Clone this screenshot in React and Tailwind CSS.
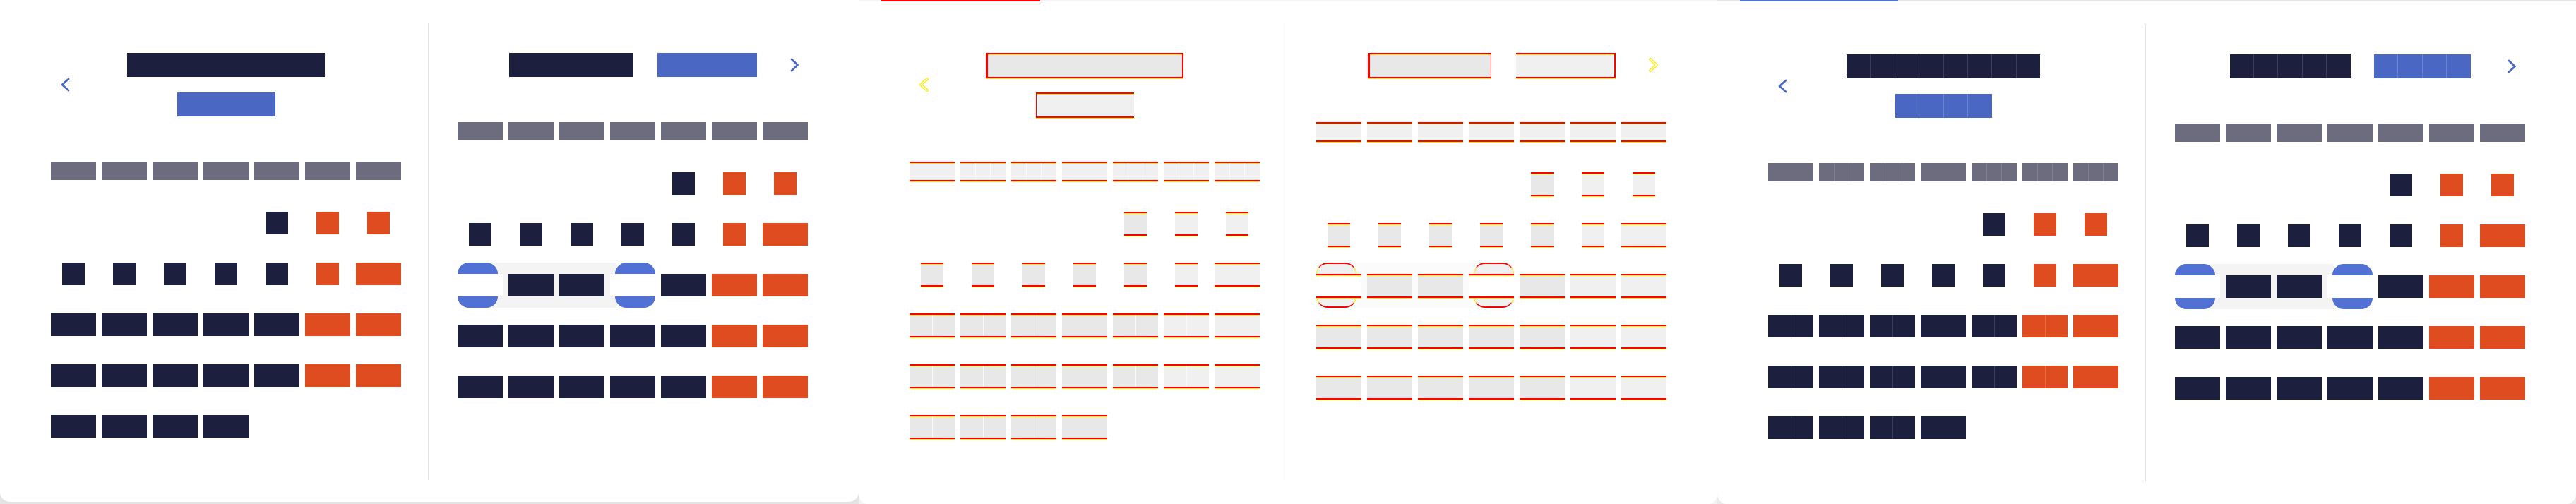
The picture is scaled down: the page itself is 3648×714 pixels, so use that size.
import clsx from "clsx";

const FILL = {
  dark: "bg-[#1c1f3d]",
  orange: "bg-[#de4c1f]",
  grey: "bg-[#6c6c7e]",
  blue: "bg-[#4b67c4]",
  white: "bg-white",
};

const DIFF_FILL = {
  dark: "bg-[#e8e8e8]",
  orange: "bg-[#f0f0f0]",
  grey: "bg-[#f0f0f0]",
  blue: "bg-[#f0f0f0]",
  white: "bg-white",
};

const SEAM = {
  dark: "divide-[#3a3d5c]",
  orange: "divide-[#e6693f]",
  grey: "divide-[#7e7e8f]",
  blue: "divide-[#6a82d2]",
  white: "divide-white",
};

// seams per weekday cell in the left month of the shifted copy
const WD_SEAMS = [0, 2, 2, 0, 2, 2, 2];

// widths of the header blocks, the shifted copy renders a bit narrower
const HEAD = {
  a: { lt: "w-[280px]", lb: "w-[139px]", rt: "w-[175px]", rb: "w-[141px]", gap: "gap-[35px]" },
  diff: { lt: "w-[280px]", lb: "w-[139px]", rt: "w-[175px]", rb: "w-[141px]", gap: "gap-[35px]" },
  b: { lt: "w-[274px]", lb: "w-[137px]", rt: "w-[171px]", rb: "w-[137px]", gap: "gap-[33px]" },
};

function buildWeeks(offset, days) {
  const cells = [...Array(offset).fill(null), ...Array.from({ length: days }, (_, i) => i + 1)];
  while (cells.length % 7) cells.push(null);
  const weeks = [];
  for (let i = 0; i < cells.length; i += 7) weeks.push(cells.slice(i, i + 7));
  return weeks;
}

function Block({ kind, w, h, dh, mode, seams = 0, edge }) {
  const diff = mode === "diff";
  return (
    <div className={clsx("shrink-0", w, h)}>
      <div
        className={clsx(
          "w-full",
          diff ? dh : "h-full",
          diff ? DIFF_FILL[kind] : FILL[kind],
          diff && "border-y-2 border-[#ff0000] shadow-[0_1px_0_#ffee00,inset_0_1px_0_#ffee00]",
          diff && edge,
          seams > 0 && "flex divide-x",
          seams > 0 && (diff ? "divide-[#f8f8f8]" : SEAM[kind])
        )}
      >
        {seams > 0 &&
          Array.from({ length: seams + 1 }, (_, i) => <span key={i} className="h-full flex-1" />)}
      </div>
    </div>
  );
}

function Chevron({ dir, mode }) {
  const pts = dir === "left" ? "12,2 3,10 12,18" : "2,2 10.5,10 2,18";
  const w = dir === "left" ? 14 : 13;
  return (
    <svg width={w} height="20" viewBox={`0 0 ${w} 20`} fill="none" className="block">
      {mode === "diff" ? (
        <>
          <polyline points={pts} stroke="#ffee00" strokeWidth="4" strokeLinecap="round" strokeLinejoin="round" />
          <polyline points={pts} stroke="#ffffff" strokeWidth="1.6" strokeLinecap="round" strokeLinejoin="round" />
        </>
      ) : (
        <polyline points={pts} stroke="#4b67c4" strokeWidth="2.8" strokeLinecap="round" strokeLinejoin="round" />
      )}
    </svg>
  );
}

function LeftHeader({ mode }) {
  const s = HEAD[mode];
  return (
    <div className="flex h-[90px] items-center">
      <div className="w-[40px] pl-[13px]">
        <Chevron dir="left" mode={mode} />
      </div>
      <div className="flex flex-1 flex-col items-center gap-[22px]">
        <Block kind="dark" w={s.lt} h="h-[34px]" dh="h-[36px]" mode={mode} seams={mode === "b" ? 7 : 0} edge="border-l-[3px] border-r-2" />
        <Block kind="blue" w={s.lb} h="h-[34px]" dh="h-[36px]" mode={mode} seams={mode === "b" ? 3 : 0} edge="border-l" />
      </div>
      <div className="w-[40px]" />
    </div>
  );
}

function RightHeader({ mode }) {
  const s = HEAD[mode];
  return (
    <div className="flex h-[34px] items-center">
      <div className="w-[40px]" />
      <div className={clsx("flex flex-1 items-start justify-center", s.gap)}>
        <Block kind="dark" w={s.rt} h="h-[34px]" dh="h-[36px]" mode={mode} seams={mode === "b" ? 4 : 0} edge="border-l-[3px] border-r" />
        <Block kind="blue" w={s.rb} h="h-[34px]" dh="h-[36px]" mode={mode} seams={mode === "b" ? 3 : 0} edge="border-r-2" />
      </div>
      <div className="flex w-[40px] justify-end pr-[12px]">
        <Chevron dir="right" mode={mode} />
      </div>
    </div>
  );
}

function DayCell({ day, col, side, mode }) {
  if (!day) return <div className="relative h-[32px]" />;
  const wide = day >= 10;
  const edgeDay = side === "right" && (day === 11 || day === 14);
  const kind = edgeDay ? "white" : col >= 5 ? "orange" : "dark";
  const seams = mode !== "a" && side === "left" && day >= 11 && col !== 3 && col !== 6 ? 1 : 0;
  return (
    <div className="relative flex h-[32px] items-start justify-center">
      {edgeDay && (
        <div
          className={clsx(
            "absolute -top-4 -bottom-4 w-[57px] rounded-[16px]",
            day === 11 ? "left-0" : "right-0",
            mode === "diff"
              ? "border border-[#ffee00] border-y-2 border-y-[#ff0000] bg-[#f0f0f0]"
              : "bg-[#5271d5]"
          )}
        />
      )}
      <div className="relative">
        <Block kind={kind} w={wide ? "w-[64px]" : "w-[32px]"} h="h-[32px]" dh="h-[34px]" mode={mode} seams={seams} />
      </div>
    </div>
  );
}

function Month({ side, mode }) {
  const left = side === "left";
  const weeks = buildWeeks(4, left ? 28 : 31);
  return (
    <div className="flex w-[496px] shrink-0 flex-col pt-[43px]">
      {left ? <LeftHeader mode={mode} /> : <RightHeader mode={mode} />}

      <div className="mt-[64px] grid grid-cols-7 gap-x-[8px]">
        {WD_SEAMS.map((n, i) => (
          <Block
            key={i}
            kind="grey"
            w="w-full"
            h="h-[26px]"
            dh="h-[28px]"
            mode={mode}
            seams={mode !== "a" && left ? n : 0}
          />
        ))}
      </div>

      <div className="mt-[45px] flex flex-col gap-[40px]">
        {weeks.map((week, r) => {
          const hasRange = !left && week.includes(11);
          return (
            <div key={r} className="relative grid h-[32px] grid-cols-7 gap-x-[8px]">
              {hasRange && (
                <div
                  className={clsx(
                    "absolute -top-4 -bottom-4 left-[49px] w-[176px]",
                    mode === "diff" ? "bg-[#fbfbfb]" : "bg-[#f4f4f4]"
                  )}
                />
              )}
              {week.map((day, c) => (
                <DayCell key={c} day={day} col={c} side={side} mode={mode} />
              ))}
            </div>
          );
        })}
      </div>
    </div>
  );
}

function Panel({ mode }) {
  const outer = { a: "bg-[#e4e4e4]", diff: "bg-[#f3f3f3]", b: "bg-[#ebebeb]" }[mode];
  const line = { a: "bg-[#e5e5e5]", diff: "bg-[#f7f7f7]", b: "bg-[#e3e3e3]" }[mode];
  return (
    <div className={clsx("flex h-[714px] w-[1216px] shrink-0 flex-col overflow-hidden", outer)}>
      {mode !== "a" && (
        <div className={clsx("flex h-[2px] shrink-0", mode === "b" ? "bg-[#e5e5e5]" : "bg-[#f6f6f6]")}>
          <div className={clsx("ml-[32px] h-full", mode === "b" ? "w-[224px] bg-[#5271d5]" : "w-[225px] bg-[#ff0000]")} />
        </div>
      )}
      <div
        className={clsx(
          "flex shrink-0 flex-col rounded-b-[14px] bg-white",
          mode === "a" ? "h-[711px] pt-[32px]" : mode === "diff" ? "h-[712px] pt-[30px]" : "h-[712px] pt-[32px]"
        )}
      >
        <div className="flex h-[648px] px-[72px]">
          <Month side="left" mode={mode} />
          <div className="w-[80px] shrink-0 pl-[38px]">
            <div className={clsx("h-full w-px", line)} />
          </div>
          <Month side="right" mode={mode} />
        </div>
      </div>
    </div>
  );
}

export default function App() {
  return (
    <div className="flex h-[714px] w-[3648px] overflow-hidden bg-white">
      <Panel mode="a" />
      <Panel mode="diff" />
      <Panel mode="b" />
    </div>
  );
}
